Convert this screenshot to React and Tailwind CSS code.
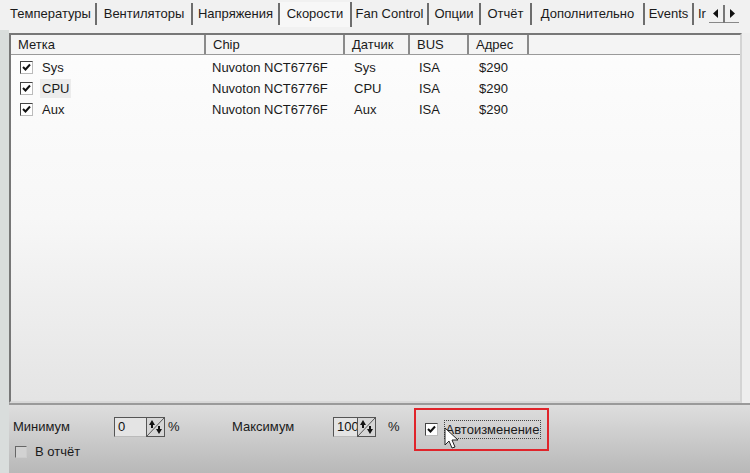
import React from "react";

const tabs = [
  { label: "Температуры", w: 91 },
  { label: "Вентиляторы", w: 96 },
  { label: "Напряжения", w: 87 },
  { label: "Скорости", w: 72, active: true },
  { label: "Fan Control", w: 77 },
  { label: "Опции", w: 52 },
  { label: "Отчёт", w: 51 },
  { label: "Дополнительно", w: 113 },
  { label: "Events", w: 49 },
];

const columns = [
  { label: "Метка", w: 195 },
  { label: "Chip", w: 139 },
  { label: "Датчик", w: 65 },
  { label: "BUS", w: 59 },
  { label: "Адрес", w: 60 },
];

const rows = [
  { name: "Sys", chip: "Nuvoton NCT6776F", sensor: "Sys", bus: "ISA", addr: "$290" },
  { name: "CPU", chip: "Nuvoton NCT6776F", sensor: "CPU", bus: "ISA", addr: "$290", focus: true },
  { name: "Aux", chip: "Nuvoton NCT6776F", sensor: "Aux", bus: "ISA", addr: "$290" },
];

const Check = ({ checked }) => (
  <div className="w-[13px] h-[13px] border border-[#444] border-r-[#bbb] border-b-[#bbb] bg-white flex items-center justify-center">
    {checked && (
      <svg width="9" height="9" viewBox="0 0 9 9">
        <path d="M1 4 L3.5 6.5 L8 1.5" stroke="#111" strokeWidth="2" fill="none" />
      </svg>
    )}
  </div>
);

const Spinner = () => (
  <div className="w-[19px] h-[20px] border border-[#555] bg-[#d6d6d6] relative">
    <svg width="17" height="18" viewBox="0 0 17 18" className="absolute left-0 top-0">
      <line x1="17" y1="0" x2="0" y2="18" stroke="#555" strokeWidth="1" />
      <path d="M2 7 L5 2 L8 7 Z" fill="#111" />
      <rect x="4" y="6" width="2" height="4" fill="#111" />
      <path d="M9 11 L12 16 L15 11 Z" fill="#111" />
      <rect x="11" y="8" width="2" height="4" fill="#111" />
    </svg>
  </div>
);

const NumBox = ({ value, w }) => (
  <div className="flex items-center">
    <div
      className={`h-[20px] border border-[#555] border-r-0 border-b-[#bbb] bg-[#e4e4e4] pl-[3px] text-[13px] leading-[18px] text-[#111] ${w}`}
    >
      {value}
    </div>
    <Spinner />
  </div>
);

export default function App() {
  return (
    <div
      className="w-[750px] h-[473px] overflow-hidden bg-[#eeeeee] flex flex-col relative text-[#1a1a1a]"
      style={{ fontFamily: '"Liberation Sans", Arial, sans-serif' }}
    >
      {/* Tab strip */}
      <div className="h-[30px] flex items-start pt-[3px] pl-[6px] bg-[#f1f1f1] text-[13px]">
        {tabs.map((t) => (
          <div
            key={t.label}
            style={{ width: t.w }}
            className={`flex items-center justify-center whitespace-nowrap shrink-0 ${
              t.active
                ? "bg-[#f7f7f7] -mt-[1px] h-[25px] border-r-2 border-[#6d6d6d] pb-[2px]"
                : "h-[22px] border-r-2 border-[#6d6d6d]"
            }`}
          >
            {t.label}
          </div>
        ))}
        <div className="h-[22px] flex items-center pl-[4px] w-[15px] overflow-hidden whitespace-nowrap shrink-0">
          Ir
        </div>
        <div className="flex items-center h-[18px] mt-[2px] border-b border-[#888]">
          <div className="w-[14px] h-[16px] flex items-center justify-center">
            <svg width="6" height="9" viewBox="0 0 6 9">
              <path d="M5 0 L0 4.5 L5 9 Z" fill="#111" />
            </svg>
          </div>
          <div className="w-[2px] h-[18px] bg-[#777]" />
          <div className="w-[14px] h-[16px] flex items-center justify-center">
            <svg width="6" height="9" viewBox="0 0 6 9">
              <path d="M1 0 L6 4.5 L1 9 Z" fill="#111" />
            </svg>
          </div>
        </div>
      </div>

      {/* Body */}
      <div className="flex flex-1 min-h-0">
        <div className="w-[9px] bg-[#d9dddc] shrink-0" />
        <div className="flex-1 flex flex-col min-w-0">
          <div className="h-[3px] bg-[#f1f1f1]" />
          {/* List view */}
          <div className="h-[370px] mr-[8px] border-2 border-[#777] border-r-[#d4d4d4] border-b-[#d8d8d8] bg-gradient-to-b from-[#fdfdfd] via-[#f7f7f7] to-[#e4e4e4] flex flex-col text-[13px]">
            <div className="h-[20px] flex border-b border-[#9a9a9a] shrink-0">
              {columns.map((c) => (
                <div
                  key={c.label}
                  style={{ width: c.w }}
                  className="h-full flex items-center pl-[7px] border-r-2 border-[#8a8a8a] bg-[#f4f4f4] shrink-0"
                >
                  {c.label}
                </div>
              ))}
              <div className="flex-1 bg-[#f4f4f4]" />
            </div>
            <div className="pt-[2px]">
              {rows.map((r) => (
                <div key={r.name} className="h-[21px] flex items-center">
                  <div className="w-[195px] flex items-center pl-[9px] gap-[7px] shrink-0">
                    <Check checked />
                    <span
                      className={`px-[2px] leading-[19px] ${
                        r.focus ? "bg-[#ececec]" : ""
                      }`}
                    >
                      {r.name}
                    </span>
                  </div>
                  <div className="w-[139px] pl-[6px] shrink-0">{r.chip}</div>
                  <div className="w-[65px] pl-[9px] shrink-0">{r.sensor}</div>
                  <div className="w-[59px] pl-[9px] shrink-0">{r.bus}</div>
                  <div className="w-[60px] pl-[10px] shrink-0">{r.addr}</div>
                </div>
              ))}
            </div>
          </div>

          {/* Bottom panel */}
          <div className="flex-1 border-t-2 border-[#9a9a9a] bg-gradient-to-b from-[#dedede] to-[#b8b8b8] text-[13px] pl-[4px] pt-[2px]">
            <div className="flex items-center h-[38px] pt-[1px]">
              <span className="w-[101px]">Минимум</span>
              <NumBox value="0" w="w-[32px]" />
              <span className="ml-[3px] w-[64px]">%</span>
              <span className="w-[101px]">Максимум</span>
              <NumBox value="100" w="w-[24px]" />
              <span className="ml-[12px]">%</span>
              <div className="ml-[14px] h-[43px] w-[135px] border-2 border-[#e0242a] flex items-center pl-[9px] self-start">
                <Check checked />
                <span className="ml-[6px] border border-dotted border-[#444] px-[1px] leading-[17px]">
                  Автоизменение
                </span>
              </div>
            </div>
            <div className="flex items-center gap-[8px] pl-[2px] -mt-[3px]">
              <div className="w-[12px] h-[12px] border border-[#666] border-r-[#ccc] border-b-[#ccc] bg-[#d2d2d2]" />
              <span>В отчёт</span>
            </div>
          </div>
        </div>
      </div>

      {/* Mouse cursor */}
      <svg
        className="absolute left-[444px] top-[427px]"
        width="16"
        height="24"
        viewBox="0 0 16 24"
      >
        <path
          d="M1 1 L1 18 L5 14 L8 21 L11 20 L8 13 L14 13 Z"
          fill="#fff"
          stroke="#222"
          strokeWidth="1"
        />
      </svg>
    </div>
  );
}
